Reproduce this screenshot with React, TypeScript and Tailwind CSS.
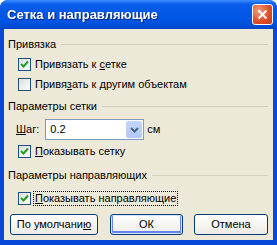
import React, { useState } from 'react';

const FONT = { fontFamily: '"Liberation Sans", Arial, sans-serif' };

function XPCheck({ checked }: { checked: boolean }) {
  return (
    <span className="w-[13px] h-[13px] shrink-0 border border-[#1c5180] bg-gradient-to-br from-[#dcdcd7] to-white flex items-center justify-center">
      {checked && (
        <svg width="9" height="9" viewBox="0 0 9 9">
          <path d="M1 4 L3.5 6.5 L8 1.5" stroke="#21a121" strokeWidth="2" fill="none" />
        </svg>
      )}
    </span>
  );
}

function GroupLabel({ text }: { text: string }) {
  return (
    <div className="flex items-center h-[13px] pl-[4px] pr-[5px]">
      <span className="leading-[13px]">{text}</span>
      <div className="flex-1 ml-[5px] border-t border-[#d0d0bf]" />
    </div>
  );
}

function CheckRow({
  checked,
  onToggle,
  label,
  focus,
}: {
  checked: boolean;
  onToggle: () => void;
  label: React.ReactNode;
  focus?: boolean;
}) {
  return (
    <div className="flex items-center h-[13px] pl-[14px] cursor-default" onClick={onToggle}>
      <XPCheck checked={checked} />
      <span
        className={`ml-[3px] leading-[13px] px-[1px] ${focus ? 'outline outline-1 outline-dotted outline-black' : ''}`}
      >
        {label}
      </span>
    </div>
  );
}

function XPButton({ children, isDefault }: { children: React.ReactNode; isDefault?: boolean }) {
  return (
    <button
      className={`h-[21px] rounded-[3px] border border-[#003c74] bg-gradient-to-b from-white to-[#ecebe6] text-black leading-[13px] flex items-center justify-center ${
        isDefault ? 'shadow-[inset_0_0_0_1px_#cee7ff,inset_0_-1px_0_2px_#6982ee]' : ''
      }`}
    >
      {children}
    </button>
  );
}

export default function App() {
  const [snapGrid, setSnapGrid] = useState(true);
  const [snapObj, setSnapObj] = useState(false);
  const [showGrid, setShowGrid] = useState(true);
  const [showGuides, setShowGuides] = useState(true);

  return (
    <div className="w-[277px] h-[245px] bg-[#0848d8] rounded-t-[8px] flex flex-col overflow-hidden text-[11px] text-black" style={FONT}>
      <div className="h-[29px] shrink-0 bg-[linear-gradient(to_bottom,#3d8dff_0px,#0a5eeb_4px,#0257e8_14px,#0054e3_22px,#0046c9_29px)] flex items-center pl-[7px] pr-[4px]">
        <span className="text-white font-bold text-[13px] flex-1 drop-shadow-[1px_1px_0_#0a2a80]">
          Сетка и направляющие
        </span>
        <div className="w-[21px] h-[21px] rounded-[3px] border border-white bg-[radial-gradient(circle_at_30%_30%,#f0a080,#e0502a_55%,#c33a1a)] flex items-center justify-center">
          <svg width="11" height="11" viewBox="0 0 11 11">
            <path d="M1.5 1.5 L9.5 9.5 M9.5 1.5 L1.5 9.5" stroke="white" strokeWidth="2" />
          </svg>
        </div>
      </div>

      <div className="flex-1 mx-[4px] mb-[5px] bg-[#ece9d8] flex flex-col pt-[9px]">
        <GroupLabel text="Привязка" />
        <div className="mt-[7px]">
          <CheckRow
            checked={snapGrid}
            onToggle={() => setSnapGrid(!snapGrid)}
            label={<>Привязать к <u>с</u>етке</>}
          />
        </div>
        <div className="mt-[7px]">
          <CheckRow
            checked={snapObj}
            onToggle={() => setSnapObj(!snapObj)}
            label={<>Привя<u>з</u>ать к другим объектам</>}
          />
        </div>

        <div className="mt-[9px]">
          <GroupLabel text="Параметры сетки" />
        </div>
        <div className="mt-[6px] flex items-center pl-[12px]">
          <span className="leading-[13px]"><u>Ш</u>аг:</span>
          <div className="ml-[6px] w-[99px] h-[21px] border border-[#7f9db9] bg-white flex items-center">
            <span className="flex-1 pl-[4px] leading-[13px]">0.2</span>
            <div className="w-[16px] h-[17px] mr-[1px] rounded-[2px] bg-gradient-to-b from-[#c6d6fc] to-[#b4c8f6] flex items-center justify-center">
              <svg width="9" height="6" viewBox="0 0 9 6">
                <path d="M1 1 L4.5 4.5 L8 1" stroke="#4d6185" strokeWidth="2" fill="none" />
              </svg>
            </div>
          </div>
          <span className="ml-[3px] leading-[13px]">см</span>
        </div>
        <div className="mt-[5px]">
          <CheckRow
            checked={showGrid}
            onToggle={() => setShowGrid(!showGrid)}
            label={<><u>П</u>оказывать сетку</>}
          />
        </div>

        <div className="mt-[11px]">
          <GroupLabel text="Параметры направляющих" />
        </div>
        <div className="mt-[10px]">
          <CheckRow
            checked={showGuides}
            onToggle={() => setShowGuides(!showGuides)}
            label={<><u>П</u>оказывать направляющие</>}
            focus
          />
        </div>

        <div className="mt-[9px] flex pl-[6px]">
          <div className="w-[88px]">
            <XPButton>
              <span className="w-[86px]">По умолчани<u>ю</u></span>
            </XPButton>
          </div>
          <div className="ml-[12px] w-[73px] flex">
            <div className="w-full"><XPButton isDefault><span className="w-[71px]">ОК</span></XPButton></div>
          </div>
          <div className="ml-[11px] w-[74px]">
            <XPButton><span className="w-[72px]">Отмена</span></XPButton>
          </div>
        </div>
      </div>
    </div>
  );
}
